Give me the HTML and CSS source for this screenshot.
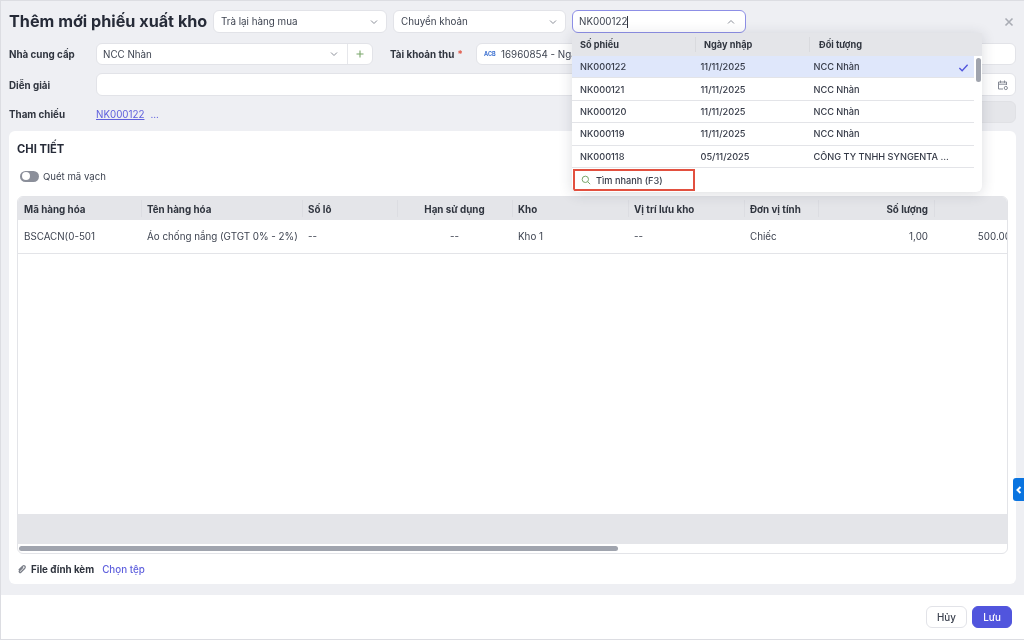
FILE: index.html
```html
<!DOCTYPE html>
<html lang="vi">
<head>
<meta charset="utf-8">
<title>Thêm mới phiếu xuất kho</title>
<link rel="stylesheet" href="styles.css">
</head>
<body>
<div class="modal">
  <main class="main">
    <header class="top">
      <h1 class="title">Thêm mới phiếu xuất kho</h1>
      <div class="field sel sel-top"><span>Trà lại hàng mua</span><svg class="chev" viewBox="0 0 10 10"><path d="M2 3.5 5 6.5 8 3.5"/></svg></div>
      <div class="field sel sel-top sel-mid"><span>Chuyển khoản</span><svg class="chev" viewBox="0 0 10 10"><path d="M2 3.5 5 6.5 8 3.5"/></svg></div>
      <div class="field sel sel-top focus"><span class="typed">NK000122</span><i class="caret"></i><svg class="chev" viewBox="0 0 10 10"><path d="M2 6.5 5 3.5 8 6.5"/></svg></div>
      <svg class="close" viewBox="0 0 10 10"><path d="M1.5 1.5 8.5 8.5M8.5 1.5 1.5 8.5"/></svg>
    </header>

    <div class="row row-2">
      <label class="lab">Nhà cung cấp</label>
      <div class="field group">
        <div class="group-main"><span>NCC Nhàn</span><svg class="chev" viewBox="0 0 10 10"><path d="M2 3.5 5 6.5 8 3.5"/></svg></div>
        <div class="group-add"><svg viewBox="0 0 10 10"><path d="M5 1.5V8.5M1.5 5H8.5"/></svg></div>
      </div>
      <label class="lab lab-acc">Tài khoản thu <b class="req">*</b></label>
      <div class="field acc"><span class="bank">ACB</span><span>16960854 - Ngân hàng</span></div>
    </div>

    <div class="row row-3">
      <label class="lab">Diễn giải</label>
      <div class="field grow date">
        <svg class="cal" viewBox="0 0 12 12"><path d="M1.5 10V3h8v3M1.5 5.2h8M3.5 1.5v2.4M7.5 1.5v2.4M1.5 10h4.5"/><circle cx="8.8" cy="9" r="1.6"/></svg>
      </div>
    </div>

    <div class="row row-4">
      <label class="lab">Tham chiếu</label>
      <a class="ref">NK000122</a>
      <span class="more">...</span>
      <div class="disabled"></div>
    </div>

    <section class="card">
      <h2 class="card-title">CHI TIẾT</h2>
      <div class="scan"><span class="toggle"></span><span>Quét mã vạch</span></div>
      <div class="grid-wrap">
        <div class="grid-scroll">
          <table class="grid">
            <colgroup>
              <col class="c1"><col class="c2"><col class="c3"><col class="c4"><col class="c5"><col class="c6"><col class="c7"><col class="c8"><col class="c9">
            </colgroup>
            <thead>
              <tr>
                <th>Mã hàng hóa</th><th>Tên hàng hóa</th><th>Số lô</th><th class="ctr">Hạn sử dụng</th><th>Kho</th><th>Vị trí lưu kho</th><th>Đơn vị tính</th><th class="num">Số lượng</th><th></th>
              </tr>
            </thead>
            <tbody>
              <tr>
                <td>BSCACN(0-501</td><td>Áo chống nắng (GTGT 0% - 2%)</td><td>--</td><td class="ctr">--</td><td>Kho 1</td><td>--</td><td>Chiếc</td><td class="num">1,00</td><td class="num">500.000</td>
              </tr>
            </tbody>
          </table>
        </div>
        <div class="summary"></div>
        <div class="hbar"><div class="hthumb"></div></div>
      </div>
      <div class="files">
        <svg class="clip" viewBox="0 0 12 12"><path d="M2.2 7.2 6.8 2.6a1.7 1.7 0 0 1 2.6 2.4L4.6 9.8a1.1 1.1 0 0 1-1.6-1.6L7.2 4"/></svg>
        <span class="files-lab">File đính kèm</span>
        <a class="pick">Chọn tệp</a>
      </div>
    </section>
  </main>

  <footer class="foot">
    <button class="btn">Hủy</button>
    <button class="btn primary">Lưu</button>
  </footer>
</div>

<div class="drop">
  <div class="d-head d-cols">
    <span>Số phiếu</span><span>Ngày nhập</span><span>Đối tượng</span>
  </div>
  <div class="d-body">
    <div class="d-rows">
      <div class="d-row d-cols sel-row"><span>NK000122</span><span>11/11/2025</span><span>NCC Nhàn</span>
        <svg class="check" viewBox="0 0 12 12"><path d="M1.5 6.5 4.5 9.5 10.5 3"/></svg></div>
      <div class="d-row d-cols"><span>NK000121</span><span>11/11/2025</span><span>NCC Nhàn</span></div>
      <div class="d-row d-cols"><span>NK000120</span><span>11/11/2025</span><span>NCC Nhàn</span></div>
      <div class="d-row d-cols"><span>NK000119</span><span>11/11/2025</span><span>NCC Nhàn</span></div>
      <div class="d-row d-cols"><span>NK000118</span><span>05/11/2025</span><span>CÔNG TY TNHH SYNGENTA ...</span></div>
    </div>
    <div class="d-scroll"><div class="d-thumb"></div></div>
  </div>
  <div class="d-foot">
    <div class="quick">
      <svg class="search" viewBox="0 0 12 12"><circle cx="5.2" cy="5.2" r="3.8"/><path d="M8 8 11 11"/></svg>
      <span>Tìm nhanh (F3)</span>
    </div>
  </div>
</div>

<div class="tab"><svg viewBox="0 0 8 10"><path d="M5.5 2 2.5 5 5.5 8"/></svg></div>
</body>
</html>
```

FILE: styles.css
```css
* { box-sizing: border-box; }
html, body { margin: 0; height: 100%; overflow: hidden; }
body {
  width: 1024px;
  height: 640px;
  position: relative;
  font-family: Inter, "Noto Sans", sans-serif;
  font-size: 9.8px;
  color: #3d4350;
  background: #fff;
  filter: blur(.35px);
}
.modal {
  width: 1024px;
  height: 640px;
  display: flex;
  flex-direction: column;
  border: 1px solid #dcdde2;
  border-width: 1px 0 1px 1px;
}
.main {
  height: 594px;
  background: #eeeff3;
  padding: 9px 8px 11px 8px;
  display: flex;
  flex-direction: column;
}
.top { display: flex; align-items: center; height: 23px; }
.title {
  margin: 0 7px 0 0;
  font-size: 16.2px;
  line-height: 23px;
  font-weight: 700;
  color: #262b38;
  white-space: nowrap;
  width: 197px;
  flex: none;
}
.field {
  background: #fff;
  border: 1px solid #e2e3e8;
  border-radius: 6px;
  display: flex;
  align-items: center;
}
.sel { justify-content: space-between; padding: 0 7px; }
.sel-top { width: 174px; height: 23px; margin-right: 6px; flex: none; }
.sel-mid { width: 173px; }
.focus { border-color: #8d8fe6; justify-content: flex-start; padding-left: 6px; }
.focus .chev { margin-left: auto; margin-right: 2px; }
.caret { width: 1px; height: 12px; background: #30343f; margin-left: 0; }
.chev { width: 10px; height: 10px; fill: none; stroke: #8b8f99; stroke-width: 1; flex: none; }
.close { width: 10px; height: 10px; fill: none; stroke: #a9acb4; stroke-width: 1.6; margin-left: auto; margin-right: 2px; flex: none; }

.row { display: flex; align-items: center; }
.row-2 { height: 22px; margin-top: 10px; }
.row-3 { height: 23px; margin-top: 8px; }
.row-4 { height: 22px; margin-top: 5px; }
.lab { width: 87px; font-weight: 650; color: #30353f; white-space: nowrap; flex: none; }
.row-2 .lab { margin-top: 1px; }
.row-3 .lab { margin-top: 1px; }
.row-4 .lab, .ref, .more { margin-top: 4px; }
.group { width: 277px; height: 22px; flex: none; }
.group-main { flex: 1; display: flex; align-items: center; justify-content: space-between; padding: 0 7px 0 6px; }
.group-main .chev { margin-right: 1px; }
.group-add { width: 25px; height: 100%; border-left: 1px solid #e6e7eb; display: flex; align-items: center; justify-content: center; }
.group-add svg { width: 10px; height: 10px; fill: none; stroke: #79a66a; stroke-width: 1.1; }
.lab-acc { width: 86px; margin-left: 17px; }
.req { color: #e0503f; font-weight: 600; margin-left: 1px; }
.acc { flex: 1; height: 22px; padding: 0 7px; gap: 6px; white-space: nowrap; overflow: hidden; }
.bank { font-size: 5.5px; font-weight: 700; color: #3a6fd0; letter-spacing: 0; width: 11px; }
.grow { flex: 1; height: 23px; }
.date { justify-content: flex-end; padding-right: 6px; }
.cal { width: 12px; height: 12px; fill: none; stroke: #858994; stroke-width: 1; }
.ref { color: #5f60dd; text-decoration: underline; }
.more { color: #5f60dd; margin-left: 6px; }
.disabled { margin-left: auto; width: 300px; height: 22px; background: #e5e6ea; border: 1px solid #e0e1e5; border-radius: 6px; }

.card {
  margin-top: 8px;
  flex: 1;
  min-height: 0;
  background: #fff;
  border-radius: 6px;
  padding: 9px 8px 0 8px;
  display: flex;
  flex-direction: column;
}
.card-title { margin: 0; font-size: 11.2px; line-height: 18px; font-weight: 700; color: #262b38; }
.scan { display: flex; align-items: center; gap: 4px; margin: 10px 0 0 3px; height: 16px; font-size: 9.6px; }
.toggle {
  width: 19px; height: 11px; border-radius: 6px; background: #8b8f9a; position: relative; flex: none;
}
.toggle::after {
  content: ""; position: absolute; left: 1.5px; top: 1.5px; width: 8px; height: 8px; border-radius: 50%; background: #fff;
}
.grid-wrap {
  margin-top: 12px;
  height: 358px;
  border: 1px solid #e3e4e8;
  border-radius: 6px;
  display: flex;
  flex-direction: column;
  overflow: hidden;
  flex: none;
}
.grid-scroll { flex: 1; min-height: 0; overflow: hidden; }
.grid { border-collapse: collapse; table-layout: fixed; width: 1005px; font-size: 9.8px; }
.c1 { width: 123px; } .c2 { width: 161px; } .c3 { width: 95px; } .c4 { width: 115px; }
.c5 { width: 116px; } .c6 { width: 116px; } .c7 { width: 74px; } .c8 { width: 116px; } .c9 { width: 89px; }
.grid th {
  height: 23px; padding: 1px 6px 0; text-align: left; font-weight: 650; color: #30353f; background: #e4e5e9;
  position: relative;
}
.grid th + th::before {
  content: ""; position: absolute; left: 0; top: 3px; bottom: 3px; width: 1px; background: #dcdde2;
}
.grid td { height: 33px; padding: 1px 6px 0; border-bottom: 1px solid #e3e4e8; white-space: nowrap; overflow: hidden; }
.grid .ctr { text-align: center; }
.grid .num { text-align: right; }
.summary { height: 30px; background: #e4e5e9; flex: none; }
.hbar { height: 9px; flex: none; padding: 2px 1px 0 1px; }
.hthumb { width: 599px; height: 5px; border-radius: 3px; background: #a0a4ae; }
.files { display: flex; align-items: center; height: 16px; margin-top: 7px; }
.clip { width: 10px; height: 10px; fill: none; stroke: #7a7e88; stroke-width: 1.6; flex: none; }
.files-lab { margin-left: 4px; font-weight: 650; color: #30353f; }
.pick { margin-left: 8px; color: #5f60dd; font-weight: 500; }

.foot {
  flex: 1;
  background: #fff;
  display: flex;
  justify-content: flex-end;
  align-items: flex-start;
  gap: 5px;
  padding: 11px 12px 0 0;
}
.btn {
  font: 500 9.8px Inter, "Noto Sans", sans-serif;
  height: 22px;
  border-radius: 6px;
  border: 1px solid #e2e3e8;
  background: #fff;
  color: #3d4350;
  width: 41px;
  padding: 0;
}
.btn.primary { background: #5155dd; border-color: #5155dd; color: #fff; width: 40px; }

.drop {
  position: absolute;
  left: 572px;
  top: 33px;
  width: 410px;
  height: 159px;
  background: #fff;
  border-radius: 0 0 6px 6px;
  box-shadow: 0 2px 14px rgba(40, 44, 60, .16);
  font-size: 9.2px;
  font-weight: 500;
  color: #353a47;
  overflow: hidden;
}
.d-cols { display: grid; align-items: center; position: relative; }
.d-head {
  height: 23px;
  background: #e4e5e9;
  font-weight: 650;
  color: #30353f;
  padding-left: 8px;
  grid-template-columns: 115px 114px 1fr;
}
.d-head span + span { padding-left: 8px; border-left: 1px solid #d9dade; height: 15px; line-height: 15px; }
.d-head span + span + span { padding-left: 9px; }
.d-body { display: flex; height: 112px; }
.d-rows { width: 402px; flex: none; }
.d-row { height: 22.4px; padding-left: 8px; border-bottom: 1px solid #e3e4e8; white-space: nowrap; grid-template-columns: 120.5px 113px 1fr; }
.sel-row { background: #dfe7fb; }
.check { position: absolute; right: 5px; top: 6px; width: 11px; height: 11px; fill: none; stroke: #5155dd; stroke-width: 1.5; }
.d-scroll { flex: 1; padding: 2px 0 0 2px; }
.d-thumb { width: 5px; height: 24px; border-radius: 3px; background: #a0a4ae; }
.d-foot { height: 24px; padding: 1px 0 0 1px; }
.quick {
  width: 122px;
  height: 22px;
  border: 2px solid #e2503f;
  display: flex;
  align-items: center;
  gap: 5px;
  padding-left: 6px;
}
.search { width: 10px; height: 10px; fill: none; stroke: #79a66a; stroke-width: 1.2; flex: none; }
.tab {
  position: absolute;
  left: 1013px;
  top: 478px;
  width: 11px;
  height: 23px;
  background: #0a74e0;
  border-radius: 3px 0 0 3px;
  display: flex;
  align-items: center;
  justify-content: center;
}
.tab svg { width: 8px; height: 10px; fill: none; stroke: #fff; stroke-width: 2; }
```
